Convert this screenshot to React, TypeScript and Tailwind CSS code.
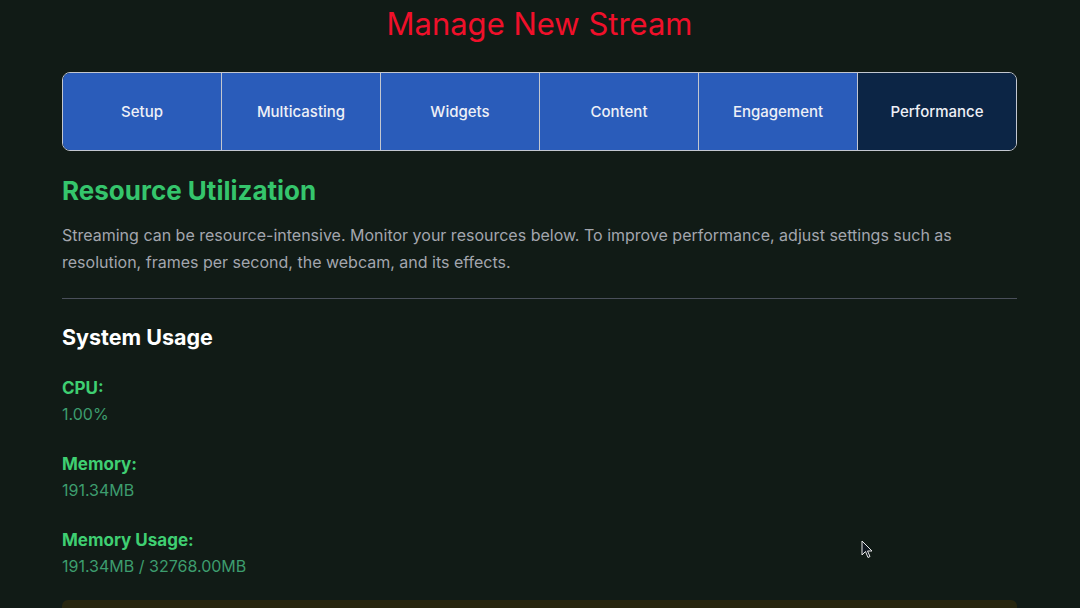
import React from "react";

const tabs = ["Setup", "Multicasting", "Widgets", "Content", "Engagement", "Performance"];

const stats = [
  { label: "CPU:", value: "1.00%" },
  { label: "Memory:", value: "191.34MB" },
  { label: "Memory Usage:", value: "191.34MB / 32768.00MB" },
];

export default function App() {
  return (
    <div
      className="relative h-[608px] w-full overflow-hidden bg-[#111b16]"
      style={{ fontFamily: "Inter, 'Noto Sans', sans-serif" }}
    >
      <div className="ml-[62px] flex w-[955px] flex-col">
        <h1 className="text-center text-[31px] leading-[48px] text-[#f0102a]">Manage New Stream</h1>

        <div className="mt-[24px] flex h-[79px] overflow-hidden rounded-[8px] border border-[#c3c7d0]">
          {tabs.map((t, i) => (
            <div
              key={t}
              className={
                "flex flex-1 items-center justify-center pt-[1px] text-[15px] font-medium text-[#eef0f6] " +
                (i > 0 ? "border-l border-[#c3c7d0] " : "") +
                (t === "Performance" ? "bg-[#0c2545]" : "bg-[#2a5cba]")
              }
            >
              {t}
            </div>
          ))}
        </div>

        <h2 className="mt-[24px] text-[26px] font-bold leading-[32px] text-[#35c56c]">Resource Utilization</h2>
        <p className="mt-[15px] text-[16px] leading-[27px] text-[#a3a6ae]">
          Streaming can be resource-intensive. Monitor your resources below. To improve performance, adjust settings
          such as resolution, frames per second, the webcam, and its effects.
        </p>

        <div className="mt-[22px] h-px bg-[#4a4f5a]" />

        <h3 className="mt-[24px] text-[21.5px] font-bold leading-[28px] text-white">System Usage</h3>

        <div className="mt-[25px] flex flex-col gap-[26px]">
          {stats.map((s) => (
            <div key={s.label} className="flex flex-col gap-[2px]">
              <div className="text-[17px] font-bold leading-[24px] text-[#3fcf72]">{s.label}</div>
              <div className="text-[16px] leading-[24px] text-[#3d9d6e]">{s.value}</div>
            </div>
          ))}
        </div>

        <div className="mt-[22px] h-[40px] rounded-[6px] bg-[#27260f]" />
      </div>

      <svg
        className="absolute left-[861px] top-[540px]"
        width="13"
        height="19"
        viewBox="0 0 13 19"
      >
        <path d="M1 1 L1 15 L4.5 11.5 L7 17.5 L9 16.5 L6.5 11 L11 11 Z" fill="#101820" stroke="#e8e8e8" strokeWidth="1" />
      </svg>
    </div>
  );
}
